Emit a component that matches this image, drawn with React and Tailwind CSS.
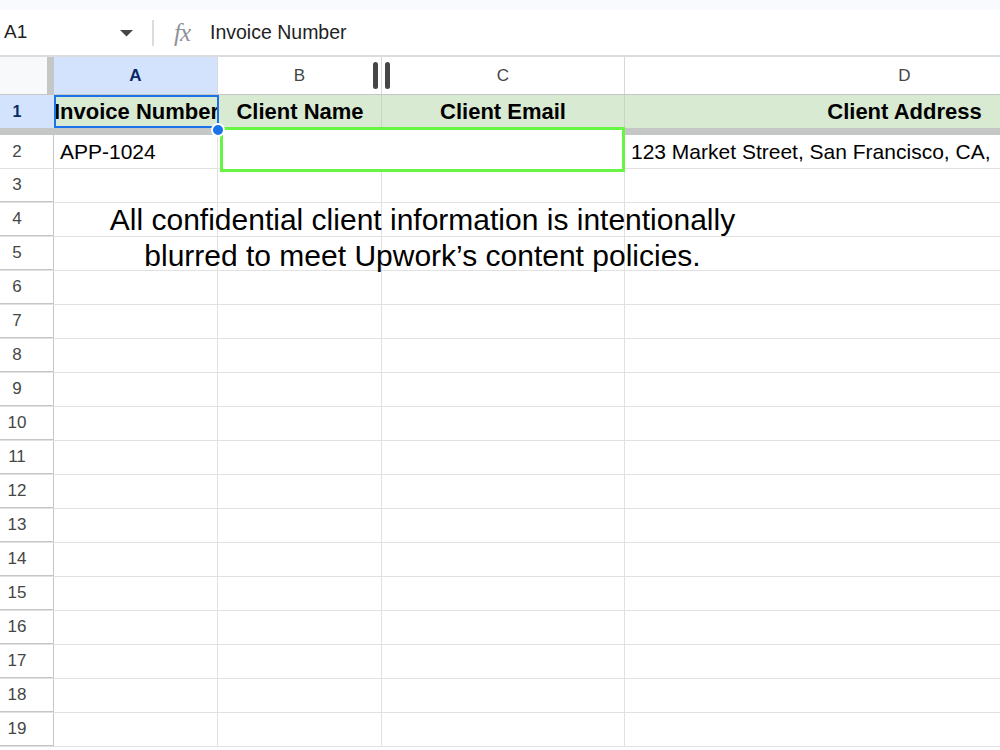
import React from "react";

const cols = [
  { key: "A", width: "w-[164px]" },
  { key: "B", width: "w-[164px]" },
  { key: "C", width: "w-[243px]" },
  { key: "D", width: "w-[560px]" },
];

const headers = ["Invoice Number", "Client Name", "Client Email", "Client Address"];

const FxIcon = () => (
  <span className="text-[#8e9297] italic text-[25px] leading-none font-['Liberation_Serif',serif] tracking-[-1px]">
    fx
  </span>
);

const App = () => {
  const emptyRows = Array.from({ length: 17 }, (_, i) => i + 3);

  return (
    <div className="relative w-[1000px] h-[750px] overflow-hidden bg-white font-['Liberation_Sans',Arial,sans-serif] text-[#1f1f1f]">
      {/* top strip */}
      <div className="h-[10px] bg-[#f8fafd]" />

      {/* formula bar */}
      <div className="h-[47px] flex items-center border-b-2 border-[#dadce0]">
        <div className="w-[150px] shrink-0 flex items-center justify-between pl-[4px] pr-[17px]">
          <span className="text-[19px]">A1</span>
          <svg width="13" height="8" viewBox="0 0 13 8">
            <path d="M0 1 L13 1 L6.5 7.5 Z" fill="#444746" />
          </svg>
        </div>
        <div className="w-[2px] h-[26px] bg-[#dadce0] ml-[2px]" />
        <div className="w-[56px] flex justify-center">
          <FxIcon />
        </div>
        <span className="text-[19.5px] text-[#1f1f1f]">Invoice Number</span>
      </div>

      {/* column headers */}
      <div className="flex h-[38px] border-b border-[#c4c7c5]">
        <div className="w-[47px] shrink-0 bg-[#f8f9fa]" />
        <div className="w-[7px] shrink-0 bg-[#c4c7c5]" />
        {cols.map((c) => (
          <div
            key={c.key}
            className={`${c.width} shrink-0 flex items-center justify-center border-r border-[#d9d9d9] text-[17px] ${
              c.key === "A" ? "bg-[#d3e3fd] font-bold text-[#0a2a66]" : "text-[#444746]"
            }`}
          >
            {c.key}
          </div>
        ))}
      </div>

      {/* row 1 (frozen) */}
      <div className="flex h-[33px]">
        <div className="w-[54px] shrink-0 bg-[#d3e3fd] flex items-center">
          <span className="w-[34px] text-center text-[16px] font-bold text-[#0a2a66]">1</span>
        </div>
        {cols.map((c, i) =>
          i === 0 ? (
            <div
              key={c.key}
              className="w-[165px] shrink-0 bg-[#d9ead3] flex items-center justify-center outline-2 outline-[#1a73e8] -outline-offset-2 text-[22px] font-bold text-black whitespace-nowrap"
            >
              {headers[i]}
            </div>
          ) : (
            <div
              key={c.key}
              className={`${i === 1 ? "w-[163px]" : c.width} shrink-0 bg-[#d9ead3] flex items-center justify-center border-r border-[#c8d4c4] text-[22px] font-bold text-black whitespace-nowrap`}
            >
              {headers[i]}
            </div>
          )
        )}
      </div>

      {/* freeze divider */}
      <div className="h-[7px] bg-[#c4c7c5]" />

      {/* row 2 */}
      <div className="flex h-[34px] border-b border-[#e1e1e1]">
        <div className="w-[54px] shrink-0 border-r border-[#c4c7c5] flex items-center">
          <span className="w-[34px] text-center text-[17px] text-[#444746]">2</span>
        </div>
        <div className="w-[164px] shrink-0 border-r border-[#e1e1e1] flex items-center pl-[6px] text-[21px] text-black">
          APP-1024
        </div>
        <div className="w-[164px] shrink-0 border-r border-[#e1e1e1]" />
        <div className="w-[243px] shrink-0 border-r border-[#e1e1e1]" />
        <div className="w-[560px] shrink-0 flex items-center pl-[6px] text-[21px] text-black whitespace-nowrap">
          123 Market Street, San Francisco, CA,
        </div>
      </div>

      {/* empty rows */}
      {emptyRows.map((n) => (
        <div key={n} className="flex h-[34px] border-b border-[#e1e1e1]">
          <div className="w-[54px] shrink-0 border-r border-[#c4c7c5] flex items-center border-b border-b-[#c4c7c5]">
            <span className="w-[34px] text-center text-[17px] text-[#444746]">{n}</span>
          </div>
          <div className="w-[164px] shrink-0 border-r border-[#e1e1e1]" />
          <div className="w-[164px] shrink-0 border-r border-[#e1e1e1]" />
          <div className="w-[243px] shrink-0 border-r border-[#e1e1e1]" />
          <div className="w-[560px] shrink-0" />
        </div>
      ))}

      {/* column resize handle between B and C */}
      <div className="absolute left-[373px] top-[62px] flex gap-[7px]">
        <div className="w-[5px] h-[27px] rounded-full bg-[#444746]" />
        <div className="w-[5px] h-[27px] rounded-full bg-[#444746]" />
      </div>

      {/* green annotation box (covers the blurred cells) */}
      <div className="absolute left-[220px] top-[127px] w-[405px] h-[45px] bg-white border-[3px] border-[#66f542]" />

      {/* fill handle on A1 */}
      <div className="absolute left-[211px] top-[123px] w-[14px] h-[14px] rounded-full bg-[#1a73e8] border-2 border-white" />

      {/* annotation text */}
      <div className="absolute left-[60px] top-[202px] w-[725px] text-center text-[30px] leading-[36px] text-black">
        All confidential client information is intentionally
        <br />
        blurred to meet Upwork’s content policies.
      </div>
    </div>
  );
};

export default App;
